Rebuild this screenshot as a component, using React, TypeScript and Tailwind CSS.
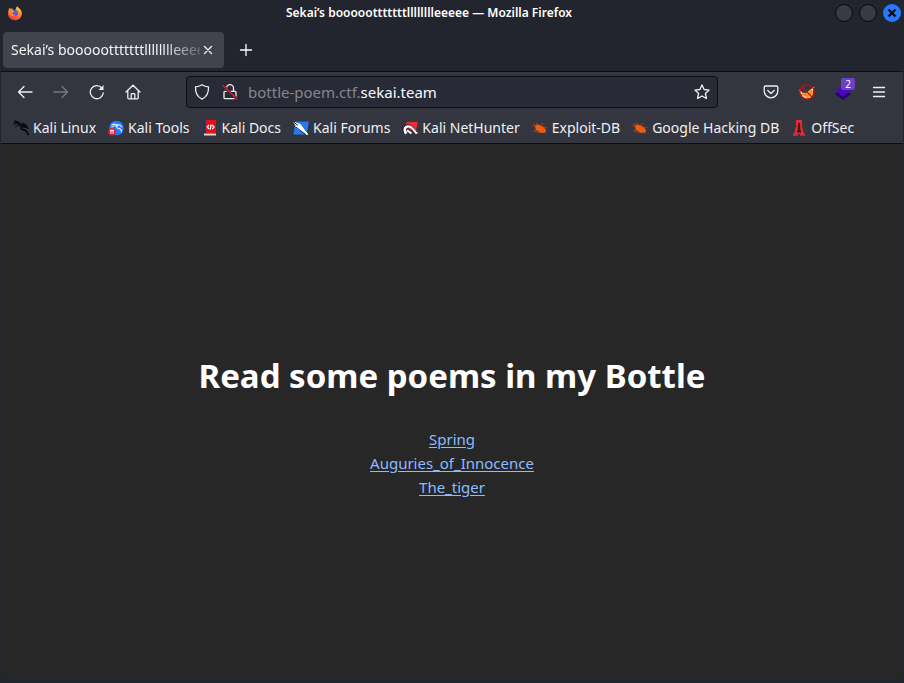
import React from "react";

type IconProps = { children: React.ReactNode; className?: string };

const pageTitle = "Sekai’s boooootttttttlllllllleeeee";

function Line({ children, className = "" }: IconProps) {
  return (
    <svg
      viewBox="0 0 16 16"
      className={`h-4 w-4 shrink-0 ${className}`}
      fill="none"
      stroke="currentColor"
      strokeWidth="1.3"
      strokeLinecap="round"
      strokeLinejoin="round"
      aria-hidden="true"
    >
      {children}
    </svg>
  );
}

function Art({ children, className = "" }: IconProps) {
  return (
    <svg viewBox="0 0 16 16" className={`h-4 w-4 shrink-0 ${className}`} aria-hidden="true">
      {children}
    </svg>
  );
}

function FirefoxLogo() {
  return (
    <Art>
      <defs>
        <linearGradient id="fx" x1="0.8" y1="0" x2="0.3" y2="1">
          <stop offset="0" stopColor="#ffe04a" />
          <stop offset="0.45" stopColor="#ff8a2a" />
          <stop offset="1" stopColor="#f0304f" />
        </linearGradient>
      </defs>
      <path d="M10 1c.6 1.4 2 1.900 3 3.100C15 6 15.400 9 14.200 11.500 12.900 14 10.600 15.200 8 15.200 4 15.200 1 12.300 1 8.500 1 6 1.500 4 2.900 2.400L3.500 4 5 3.200 6 4.800l2 .6L10 1z" fill="url(#fx)" />
      <circle cx="8" cy="8" r="3" fill="#4a62d8" />
      <path d="M2.300 6c2-1 3.500-.5 5.200.2-.4 1-2 1-2 2.200 0 1.300 1.700 1.800 3.200 1.200-1 2-4.700 2-5.900-.3z" fill="#ff8a34" />
    </Art>
  );
}

function Dragon() {
  return (
    <Art>
      <g fill="none" stroke="#08090b">
        <path d="M1 1.500c2.800 0 5.200 1.200 6.700 3.600C10 4.500 12.500 5 14 7.500l-2-.6c-2-.5-4-.4-4.200.9-.1 1.500 2.300 1.700 4.400 2.600 1.900.9 2.600 2.400 3 4.800" strokeWidth="1.800" />
        <path d="M.3 4C3 2.900 5.500 3.400 7.500 5M2 7c2-1.700 3.800-2 5.500-1.600M9 3.300l3.200.7 2 2.500" strokeWidth="1" />
      </g>
    </Art>
  );
}

function KaliTools() {
  return (
    <Art>
      <circle cx="8.500" cy="8" r="7.300" fill="#2777ff" />
      <path d="M3.500 5.300c2.500-2 4.500-1.300 6 .2C8 6.800 8.500 8 10.500 8.400s3.200 1.700 3 4M3.500 7.300c1.500-1.500 3.500-1.800 5-1.200M9 4.700c2.500-.3 4 .8 5 2.500" fill="none" stroke="#d8eaff" strokeWidth="1.100" />
      <circle cx="4" cy="11.800" r="3.800" fill="#e2202a" />
      <path d="M2 10.300h4M3 10.300v3.300m2-3.300v3.300" stroke="#fff" strokeWidth="1" />
    </Art>
  );
}

function KaliDocs() {
  return (
    <Art>
      <path d="M2 0h12v13H2z" fill="#e01218" />
      <path d="M2 0h1.500v14H2z" fill="#123475" />
      <path d="M2 13.500h12v2H2z" fill="#e7d5d3" />
      <path d="M7 5 5.200 7 7 9M10.300 5l1.800 2-1.800 2M9.300 4.500l-1.200 5" fill="none" stroke="#fff" strokeWidth="1.200" />
    </Art>
  );
}

function KaliForums() {
  return (
    <Art>
      <path d="M2.500 1.500H16l-2.500 13H.5z" fill="#2479f5" />
      <path d="m0 1.500 7.500 2.500 3.500 5 4.500 5.500-2 .5-5.500-4-3.500-2L2.500 6z" fill="#fff" />
      <path d="m0 1.500 5 4M3 7l4.500 3.700 5.500 4" fill="none" stroke="#15223a" strokeWidth="1" />
    </Art>
  );
}

function NetHunter() {
  return (
    <Art>
      <path d="M4.500 2H16l-2.500 10.500L4 7z" fill="#ee2932" />
      <path d="M4.500 13.500C1.500 11 2 7 6 6.300c4.500-.6 6 3.700 9 7.200" fill="none" stroke="#fff" strokeWidth="2.600" />
      <path d="M1.500 13C-.3 8.500 2 5 6 4.800c4 0 6 3.700 9 7.200" fill="none" stroke="#17181d" strokeWidth="0.900" />
      <path d="m5 10.200 4.500 3.300" stroke="#fff" strokeWidth="2" />
    </Art>
  );
}

function Bug() {
  return (
    <Art>
      <path d="M2.500 5 6 4.500l5 2 3 3.500-.5 2.500-4.500.500L4 10z" fill="#f15a13" />
      <path d="M1 3.500 4 6 .5 6.200M4 9.500l-2.500 1.500 3.500.5M6 5 4 2.500M8 5.500 9.500 3.800l2 .2M11.500 7l4 1M8 12l-3 1M12 12l2 1.500" fill="none" stroke="#a5461d" strokeWidth="0.900" />
    </Art>
  );
}

function OffSec() {
  return (
    <Art>
      <path d="M5 0h6v6l1 5 2.500 4.800H9.500L9 14H7l-.5 1.800h-5L4 11l1-5z" fill="#e52a31" />
      <path d="M7 3h2l.3 7 1 2.500H5.700l1-2.500z" fill="#241015" />
      <path d="M8 4v7" stroke="#8f1d22" strokeWidth="0.700" />
    </Art>
  );
}

function BlockedFox() {
  return (
    <Art>
      <path d="M3 8.500 7 9l3.500-3L14 4v6.500L11.500 14l-4 1L3 12.500z" fill="#f39a27" />
      <path d="M0 5l3.500 4L2 11zM15.500 2.500 14 7l-2-1.500zM3 11.500l3.500 1L8 15zM14 10.500l-3 2L9.500 15z" fill="#f5e6cf" />
      <path d="m6 10.500 1 1m4-2-1 1.200" stroke="#633514" strokeWidth="1" />
      <circle cx="8" cy="8" r="7.200" fill="none" stroke="#c80d14" strokeWidth="1.300" />
      <path d="m3 3 10 10" stroke="#c80d14" strokeWidth="1.300" />
    </Art>
  );
}

const bookmarks = [
  { label: "Kali Linux", icon: <Dragon /> },
  { label: "Kali Tools", icon: <KaliTools /> },
  { label: "Kali Docs", icon: <KaliDocs /> },
  { label: "Kali Forums", icon: <KaliForums /> },
  { label: "Kali NetHunter", icon: <NetHunter /> },
  { label: "Exploit-DB", icon: <Bug /> },
  { label: "Google Hacking DB", icon: <Bug /> },
  { label: "OffSec", icon: <OffSec /> },
];

function ToolButton({ label, children, className = "" }: IconProps & { label: string }) {
  return (
    <button aria-label={label} className={`flex h-8 w-9 shrink-0 items-center justify-center ${className}`}>
      {children}
    </button>
  );
}

function TitleBar() {
  return (
    <header className="flex h-7 items-center pr-0.5 pb-0.5 pl-1.5">
      <FirefoxLogo />
      <h1 className="flex-1 truncate text-center text-[12px] leading-4 font-semibold text-white">
        {pageTitle} — Mozilla Firefox
      </h1>
      <div className="flex gap-1.5">
        <button aria-label="Minimize" className="h-[18px] w-[18px] rounded-full border border-[#08090c] bg-[#383b45]" />
        <button aria-label="Maximize" className="h-[18px] w-[18px] rounded-full border border-[#08090c] bg-[#383b45]" />
        <button aria-label="Close window" className="flex h-[18px] w-[18px] items-center justify-center rounded-full bg-[#2777ff]">
          <svg viewBox="0 0 10 10" className="h-2.5 w-2.5" aria-hidden="true">
            <path d="m1.500 1.500 7 7m0-7-7 7" stroke="#0b0c10" strokeWidth="2.300" />
          </svg>
        </button>
      </div>
    </header>
  );
}

function TabBar() {
  return (
    <div className="flex h-[43px] items-center gap-1 px-0.5">
      <div className="flex h-9 w-[221px] items-center rounded bg-[#42444d] px-2 text-[14px] text-[#f4f4f6]">
        <span className="min-w-0 flex-1 overflow-hidden whitespace-nowrap [mask-image:linear-gradient(to_right,black_80%,transparent_105%)]">
          {pageTitle}
        </span>
        <button aria-label="Close tab">
          <Line>
            <path d="m4.500 4.500 7 7m0-7-7 7" />
          </Line>
        </button>
      </div>
      <ToolButton label="New tab">
        <Line className="text-white">
          <path d="M8 2.500v11M2.500 8h11" />
        </Line>
      </ToolButton>
    </div>
  );
}

function Toolbar() {
  return (
    <div className="flex h-10 items-center px-1.5">
      <ToolButton label="Back">
        <Line><path d="M15 8H1.500M7 2.500 1.500 8 7 13.500" /></Line>
      </ToolButton>
      <ToolButton label="Forward" className="text-[#797a80]">
        <Line><path d="M1 8h13.500M9 2.500 14.500 8 9 13.500" /></Line>
      </ToolButton>
      <ToolButton label="Reload">
        <Line>
          <path d="M14.300 8.800A6.500 6.500 0 1 1 12.800 4" />
          <path d="M14.500 1v5h-5z" fill="currentColor" stroke="none" />
        </Line>
      </ToolButton>
      <ToolButton label="Home">
        <Line>
          <path d="m1 8 7-6.800L15 8M2.800 7v6.800q0 1 1 1h8.400q1 0 1-1V7M6.200 14.500v-4q0-.8.8-.8h2q.8 0 .8.800v4" />
        </Line>
      </ToolButton>
      <div className="mx-[35px] flex h-8 min-w-0 flex-1 items-center rounded border border-[#0c0d12] bg-[#282a36] px-[7px]">
        <button aria-label="Tracking protection">
          <Line><path d="M8 .8q3 1.900 6.500 2.100c.3 5.900-1.300 9.700-6.500 12.300C2.800 12.600 1.200 8.800 1.500 2.900Q5 2.700 8 .8z" /></Line>
        </button>
        <button aria-label="Connection is not secure" className="ml-3">
          <Line>
            <path d="M4.500 7V4.200a3.500 3.500 0 0 1 7 0V7M3 7.300h10q1 0 1 1v5.400q0 1-1 1H3q-1 0-1-1V8.300q0-1 1-1z" />
            <path d="m1 2 14 13" stroke="#282a36" strokeWidth="3" />
            <path d="m1 1.500 14 13.500" stroke="#e5183f" />
          </Line>
        </button>
        <label className="relative ml-2.5 block min-w-0 flex-1">
          <span aria-hidden="true" className="block truncate text-[#85868e]">
            bottle-poem.ctf.<span className="text-[#fbfbfe]">sekai.team</span>
          </span>
          <input
            aria-label="Address"
            defaultValue="bottle-poem.ctf.sekai.team"
            className="absolute inset-0 w-full bg-transparent text-transparent outline-none"
          />
        </label>
        <button aria-label="Bookmark this page">
          <Line><path d="m8 .9 2.100 4.600 5 .6-3.700 3.400 1 5L8 12l-4.400 2.500 1-5L.9 6.100l5-.6z" /></Line>
        </button>
      </div>
      <ToolButton label="Save to Pocket">
        <Line><path d="M2.500 2h11q1.300 0 1.300 1.300V7a6.800 6.800 0 0 1-13.600 0V3.300Q1.200 2 2.500 2zM4.800 6.500 8 9.500l3.200-3" /></Line>
      </ToolButton>
      <ToolButton label="FoxyProxy"><BlockedFox /></ToolButton>
      <ToolButton label="Wappalyzer" className="relative">
        <Art>
          <path d="m0 10 8-5 8 5-8 6z" fill="#250078" />
          <path d="m0 6.500 8-5 8 5-8 6z" fill="#4c08b9" />
        </Art>
        <span className="absolute top-0.5 right-1.5 rounded-xs bg-[#6c3fc5] px-1 text-[10px] leading-3 text-white">2</span>
      </ToolButton>
      <ToolButton label="Menu">
        <Line><path d="M2.500 3.500h11M2.500 8h11M2.500 12.500h11" /></Line>
      </ToolButton>
    </div>
  );
}

function Bookmarks() {
  return (
    <nav aria-label="Bookmarks" className="flex h-[31px] items-center gap-3 overflow-hidden px-3 text-[14px]">
      {bookmarks.map((b) => (
        <a key={b.label} href="#" className="flex shrink-0 items-center gap-1 whitespace-nowrap">
          {b.icon}
          {b.label}
        </a>
      ))}
    </nav>
  );
}

export default function App() {
  return (
    <div className="flex min-h-screen flex-col border-x border-b-4 border-[#22242e] bg-[#22252e] font-['Noto_Sans',sans-serif] text-[15px] leading-5 text-[#f0f0f2]">
      <TitleBar />
      <TabBar />
      <div className="border-y border-[#0d0e12] bg-[#33363f]">
        <Toolbar />
        <Bookmarks />
      </div>
      <main className="flex flex-1 flex-col items-center justify-center bg-[#272728] pt-6 text-center">
        <h2 className="mb-6 text-[33px] leading-[54px] font-bold text-white">Read some poems in my Bottle</h2>
        <ul className="text-[15px] leading-6 text-[#8bbcff]">
          <li><a href="#spring" className="underline underline-offset-2">Spring</a></li>
          <li><a href="#auguries" className="underline underline-offset-2">Auguries_of_Innocence</a></li>
          <li><a href="#tiger" className="underline underline-offset-2">The_tiger</a></li>
        </ul>
      </main>
    </div>
  );
}
